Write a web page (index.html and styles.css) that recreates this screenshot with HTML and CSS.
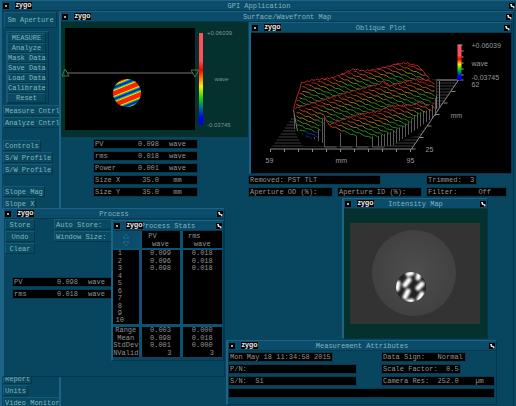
FILE: index.html
```
<!DOCTYPE html>
<html lang="en">

<head>
    <title>GPI Application</title>
    <meta charset="utf-8">
    <meta content="width=device-width, initial-scale=1" name="viewport">
    <link rel="stylesheet" href="styles.css">
</head>

<body>
    <svg class="defs" width="0" height="0">
        <symbol id="pin" viewBox="0 0 6 6">
            <path d="M1 1h2v1.500l2.500 1v2h-1l-1-1.500h-1.500z" fill="#ddd" />
        </symbol>
    </svg>

    <div class="window app">
        <header class="bar">
            <button class="menu" aria-label="Menu"></button>
            <span class="logo">zygo</span>
            <h1>GPI Application</h1>
            <svg class="pin"><use href="#pin" /></svg>
        </header>

        <div class="desk">
            <nav class="sidebar">
                <button class="btn aperture">Sm Aperture</button>
                <div class="panel">
                    <button class="btn">MEASURE</button>
                    <button class="btn">Analyze</button>
                    <button class="btn">Mask Data</button>
                    <button class="btn">Save Data</button>
                    <button class="btn">Load Data</button>
                    <button class="btn">Calibrate</button>
                    <button class="btn">Reset</button>
                </div>
                <div class="links">
                    <button class="btn">Measure Cntrl</button>
                    <button class="btn">Analyze Cntrl</button>
                </div>
                <div class="links controls">
                    <button class="btn">Controls</button>
                    <button class="btn">S/W Profile</button>
                    <button class="btn">S/W Profile</button>
                </div>
                <div class="links slopes">
                    <button class="btn">Slope Mag</button>
                    <button class="btn">Slope X</button>
                </div>
                <div class="links reports">
                    <button class="btn">Report</button>
                    <button class="btn">Units</button>
                    <button class="btn">Video Monitor</button>
                </div>
            </nav>

            <section class="window surface">
                <header class="bar">
                    <button class="menu" aria-label="Menu"></button>
                    <span class="logo">zygo</span>
                    <h2>Surface/Wavefront Map</h2>
                    <svg class="pin"><use href="#pin" /></svg>
                </header>

                <div class="columns">
                    <div class="left">
                        <div class="map">
                            <svg class="fringes" viewBox="0 0 138 104">
                                <defs>
                                    <linearGradient id="fringe" gradientUnits="userSpaceOnUse" x1="64" y1="62" x2="66" y2="67" spreadMethod="reflect">
                                        <stop offset="0.350" stop-color="#f20" />
                                        <stop offset="0.500" stop-color="#fd0" />
                                        <stop offset="0.700" stop-color="#1c2" />
                                        <stop offset="0.900" stop-color="#02e" />
                                    </linearGradient>
                                </defs>
                                <rect x="4" y="1" width="130" height="102" />
                                <path d="M6 46H132" stroke="#777" />
                                <path d="M1 49l3-7 4 7zM130 43h8l-4 7z" fill="none" stroke="#3c7a42" />
                                <circle cx="66" cy="66" r="14" fill="url(#fringe)" />
                            </svg>
                            <div class="scale"></div>
                            <div class="scale-text">
                                <span>+0.06039</span>
                                <span class="unit">wave</span>
                                <span>-0.03745</span>
                            </div>
                        </div>
                        <div class="results">
                            <div class="field reading"><span>PV</span><span>0.098</span><span>wave</span></div>
                            <div class="field reading"><span>rms</span><span>0.018</span><span>wave</span></div>
                            <div class="field reading"><span>Power</span><span>0.001</span><span>wave</span></div>
                            <div class="field reading"><span>Size X</span><span>35.0</span><span>mm</span></div>
                            <div class="field reading"><span>Size Y</span><span>35.0</span><span>mm</span></div>
                        </div>
                    </div>

                    <div class="right">
                        <section class="window oblique">
                            <header class="bar">
                                <button class="menu" aria-label="Menu"></button>
                                <span class="logo">zygo</span>
                                <h2>Oblique Plot</h2>
                                <svg class="pin"><use href="#pin" /></svg>
                            </header>
                            <svg class="plot" viewBox="0 0 257 140">
                                <defs>
                                    <linearGradient id="heat" x2="0" y2="1">
                                        <stop offset="0.300" stop-color="#ff5058" />
                                        <stop offset="0.400" stop-color="#f00" />
                                        <stop offset="0.550" stop-color="#fe0" />
                                        <stop offset="0.700" stop-color="#1c1" />
                                        <stop offset="0.900" stop-color="#00f" />
                                    </linearGradient>
                                </defs>
                                <g id="mesh"></g>
                                <rect x="205" y="12" width="4" height="35" fill="url(#heat)" />
                                <path d="M205 12h5M209 18h2M209 24h2M209 30h2M209 36h2M209 42h2" stroke="#aaa" fill="none" />
                                <text x="219" y="15">+0.06039</text>
                                <text x="219" y="33">wave</text>
                                <text x="219" y="47">-0.03745</text>
                                <text x="219" y="54">62</text>
                                <text x="198" y="85">mm</text>
                                <text x="173" y="119">25</text>
                                <text x="13" y="130">59</text>
                                <text x="83" y="130">mm</text>
                                <text x="154" y="130">95</text>
                            </svg>
                        </section>
                        <div class="notes">
                            <div class="field removed">Removed: PST TLT</div>
                            <div class="field trimmed">Trimmed:  3</div>
                            <div class="field">Aperture OD (%):</div>
                            <div class="field">Aperture ID (%):</div>
                            <div class="field">Filter:     Off</div>
                        </div>
                    </div>
                </div>
            </section>
        </div>
    </div>

    <section class="window intensity">
        <header class="bar">
            <button class="menu" aria-label="Menu"></button>
            <span class="logo">zygo</span>
            <h2>Intensity Map</h2>
            <svg class="pin"><use href="#pin" /></svg>
        </header>
        <div class="camera">
            <svg viewBox="0 0 130 101">
                <defs>
                    <clipPath id="spot"><circle cx="61" cy="64" r="15" /></clipPath>
                    <radialGradient id="glow">
                        <stop offset="0" stop-color="#4e4e4e" />
                        <stop offset="1" stop-color="#414141" />
                    </radialGradient>
                    <filter id="soft"><feGaussianBlur stdDeviation="1" /></filter>
                </defs>
                <rect width="130" height="101" fill="#333" />
                <ellipse cx="64" cy="50" rx="42" ry="43" fill="url(#glow)" />
                <g clip-path="url(#spot)">
                    <rect x="45" y="48" width="32" height="32" fill="#222" />
                    <g stroke="#fff" stroke-width="5" stroke-linecap="round" filter="url(#soft)">
                        <path d="M48 60L47 66M59 57L55 62M62 50L58 51M58 68L55 74M69 51L68 55M72 61L68 65M62 78L58 79M72 71L69 76" />
                    </g>
                </g>
            </svg>
        </div>
    </section>

    <section class="window attributes">
        <header class="bar">
            <button class="menu" aria-label="Menu"></button>
            <span class="logo">zygo</span>
            <h2>Measurement Attributes</h2>
            <svg class="pin"><use href="#pin" /></svg>
        </header>
        <div class="attribute-grid">
            <div class="field date">Mon May 18 11:34:58 2015</div>
            <div class="field sign">Data Sign:   Normal</div>
            <div class="field">P/N:</div>
            <div class="field factor">Scale Factor:  0.5</div>
            <div class="field">S/N:  S1</div>
            <div class="field">Camera Res:  252.0    µm</div>
            <div class="field comment"></div>
        </div>
    </section>

    <section class="window process">
        <header class="bar">
            <button class="menu" aria-label="Menu"></button>
            <span class="logo">zygo</span>
            <h2>Process</h2>
            <svg class="pin"><use href="#pin" /></svg>
        </header>
        <div class="process-buttons">
            <div class="links">
                <button class="btn">Store</button>
                <button class="btn">Undo</button>
                <button class="btn">Clear</button>
            </div>
            <div class="links options">
                <button class="btn">Auto Store:</button>
                <button class="btn">Window Size:</button>
            </div>
        </div>
        <div class="process-results">
            <div class="field reading"><span>PV</span><span>0.098</span><span>wave</span></div>
            <div class="field reading"><span>rms</span><span>0.018</span><span>wave</span></div>
        </div>

        <section class="window stats">
            <header class="bar">
                <button class="menu" aria-label="Menu"></button>
                <span class="logo">zygo</span>
                <h2>Process Stats</h2>
                <svg class="pin"><use href="#pin" /></svg>
            </header>
            <table>
                <thead>
                    <tr>
                        <td class="arrows"><svg viewBox="0 0 8 14"><path d="M1 5l3-4 3 4zM1 9h6l-3 4z" /></svg></td>
                        <th>PV<span>wave</span></th>
                        <th>rms<span>wave</span></th>
                    </tr>
                </thead>
                <tbody class="runs">
                    <tr><th>1</th><td>0.099</td><td>0.018</td></tr>
                    <tr><th>2</th><td>0.096</td><td>0.018</td></tr>
                    <tr><th>3</th><td>0.098</td><td>0.018</td></tr>
                    <tr><th>4</th><td></td><td></td></tr>
                    <tr><th>5</th><td></td><td></td></tr>
                    <tr><th>6</th><td></td><td></td></tr>
                    <tr><th>7</th><td></td><td></td></tr>
                    <tr><th>8</th><td></td><td></td></tr>
                    <tr><th>9</th><td></td><td></td></tr>
                    <tr><th>10</th><td></td><td></td></tr>
                </tbody>
                <tbody class="totals">
                    <tr><th>Range</th><td>0.003</td><td>0.000</td></tr>
                    <tr><th>Mean</th><td>0.098</td><td>0.018</td></tr>
                    <tr><th>StdDev</th><td>0.001</td><td>0.000</td></tr>
                    <tr><th>NValid</th><td>3</td><td>3</td></tr>
                </tbody>
            </table>
        </section>
    </section>

    <script src="plot.js"></script>
</body>

</html>
```
FILE: styles.css
```
* {
    box-sizing: border-box;
    margin: 0;
    padding: 0;
}

body {
    background: #08465f;
    color: #84b4bd;
    font-family: "Liberation Mono", "Courier New", monospace;
    font-size: 7px;
    line-height: 8px;
    min-height: 100vh;
    overflow: hidden;
    position: relative;
}

.defs {
    position: absolute;
}

/* windows */

.window {
    background: #08465f;
    border: 1px solid;
    border-color: #1c6386 #04354a #04354a #1c6386;
    border-left-width: 2px;
}

.bar {
    align-items: center;
    background: #0a4c6a;
    border-bottom: 1px solid #063a50;
    display: grid;
    grid-template-columns: 12px 17px 1fr 6px;
    height: 10px;
    padding: 0 1px;
}

.bar > * {
    grid-row: 1;
}

.bar h1,
.bar h2 {
    font-size: 7px;
    font-weight: normal;
    grid-column: 1 / -1;
    line-height: 8px;
    text-align: center;
}

.menu {
    background: #aaa;
    border: 2px solid #000;
    grid-column: 1;
    height: 6px;
    width: 6px;
    z-index: 1;
}

.logo {
    background: #000;
    color: #eee;
    font-family: "Liberation Sans", Arial, sans-serif;
    font-weight: bold;
    grid-column: 2;
    height: 7px;
    line-height: 6px;
    text-align: center;
    z-index: 1;
}

.pin {
    background: #000;
    grid-column: 4;
    height: 6px;
    width: 6px;
}

.btn {
    background: #094a63;
    border: 1px solid;
    border-color: #165a76 #04354a #04354a #165a76;
    color: inherit;
    font: inherit;
    height: 11px;
    padding: 0 1px;
    white-space: nowrap;
}

.field {
    background: #000;
    color: #929292;
    height: 8px;
    outline: 1px solid #063a50;
    padding: 0 1px;
    white-space: pre;
}

.reading {
    display: grid;
    grid-template-columns: 30px 34px 1fr;
    width: 103px;
}

.reading span:nth-child(2) {
    text-align: right;
}

.reading span:nth-child(3) {
    text-align: center;
}

/* main window */

.app {
    border-bottom: 0;
    border-right: 0;
    display: flex;
    flex-direction: column;
    min-height: 100vh;
}

.desk {
    display: flex;
    flex: 1;
}

.sidebar {
    flex: none;
    height: 395px;
    padding: 1px 0 0 2px;
    width: 57px;
}

.aperture {
    height: 16px;
    width: 53px;
}

.panel {
    border: 1px solid;
    border-color: #165a76 #04354a #04354a #165a76;
    display: flex;
    flex-direction: column;
    margin: 3px 0 1px 2px;
    padding: 1px 2px 0 0;
    width: 43px;
}

.panel .btn {
    height: 10px;
    padding: 0;
}

.links {
    align-items: flex-start;
    display: flex;
    flex-direction: column;
    gap: 1px;
    margin-left: -1px;
}

.controls {
    margin-top: 12px;
}

.slopes {
    margin-top: 11px;
}

.reports {
    margin-top: 164px;
}

.surface {
    border-bottom: 0;
    flex: 1;
    margin-right: 2px;
}

.columns {
    display: flex;
}

.left {
    flex: none;
    width: 187px;
}

.right {
    flex: 1;
    padding: 0 1px;
}

.map {
    background: #04302e;
    display: flex;
    height: 115px;
    padding-top: 5px;
}

.fringes {
    height: 104px;
    width: 138px;
}

.scale {
    background: linear-gradient(#ff5058 30%, #f00 40%, #fe0 58%, #1c1 72%, #00f 92%);
    height: 92px;
    margin-top: 6px;
    width: 4px;
}

.scale-text {
    color: #7d9492;
    display: flex;
    flex-direction: column;
    font-family: "Liberation Sans", Arial, sans-serif;
    font-size: 6px;
    height: 100px;
    justify-content: space-between;
    margin: 2px 0 0 4px;
}

.unit {
    padding-left: 4px;
    text-align: center;
}

.results {
    display: flex;
    flex-direction: column;
    gap: 4px;
    padding: 3px 0 0 33px;
}

.oblique {
    height: 152px;
}

.plot {
    background: #000;
    display: block;
    height: 140px;
    width: 100%;
}

.plot text {
    fill: #999;
    font-family: "Liberation Sans", Arial, sans-serif;
}

.notes {
    display: grid;
    gap: 4px 6px;
    grid-template-columns: 83px 83px 79px;
    padding-top: 2px;
}

.removed {
    grid-column: 1 / 3;
    width: 131px;
}

.trimmed {
    width: 49px;
}

/* floating windows */

.intensity {
    left: 342px;
    position: absolute;
    top: 198px;
    width: 146px;
}

.camera {
    background: #04302e;
    height: 129px;
    padding: 14px 7px 0 6px;
}

.camera svg {
    display: block;
    width: 100%;
}

.attributes {
    left: 226px;
    position: absolute;
    top: 340px;
    width: 271px;
}

.attribute-grid {
    display: grid;
    gap: 4px 26px;
    grid-template-columns: 127px 1fr;
    padding: 2px 2px 7px 1px;
}

.date {
    width: 103px;
}

.sign {
    width: 83px;
}

.factor {
    width: 78px;
}

.comment {
    grid-column: 1 / -1;
}

.process {
    height: 169px;
    left: 2px;
    position: absolute;
    top: 208px;
    width: 223px;
}

.process-buttons {
    display: flex;
    gap: 20px;
    padding-left: 2px;
}

.process-buttons .btn {
    width: 30px;
}

.process-buttons .options .btn {
    text-align: left;
    width: 60px;
}

.process-results {
    display: flex;
    flex-direction: column;
    gap: 4px;
    padding: 24px 0 0 9px;
}

.stats {
    left: 107px;
    padding-bottom: 3px;
    position: absolute;
    top: 11px;
    width: 113px;
}

.stats table {
    border-collapse: collapse;
    color: #929292;
    table-layout: fixed;
    width: 109px;
}

.stats th,
.stats td {
    background: #000;
    border-left: 3px solid #0d5270;
    font-weight: normal;
    line-height: 7px;
    text-align: center;
}

.stats td:first-child,
.stats th:first-child {
    border-left: 0;
    width: 27px;
}

.stats thead th {
    line-height: 8px;
    padding: 1px 16px 0 0;
}

.stats thead span {
    display: block;
    margin-right: -16px;
}

.stats .arrows {
    background: #0a4c6a;
}

.arrows svg {
    display: block;
    fill: #0a4560;
    height: 14px;
    margin: 0 auto;
    stroke: #1c6a8c;
    width: 8px;
}

.stats tbody tr {
    height: 7px;
}

.stats tbody tr:nth-child(even) {
    height: 8px;
}

.stats tbody tr:first-child > * {
    border-top: 2px solid #0d5270;
}

.stats .totals tr:first-child > * {
    border-top-width: 3px;
}

.runs th {
    padding-right: 12px;
}

.stats .totals tr:last-child td {
    padding-right: 8px;
    text-align: right;
}
```
FILE: plot.js
```
const mesh = document.getElementById('mesh');

const ridges = [
    [[41, 75], [49, 50], [60, 47], [79, 45], [90, 41], [101, 36], [111, 38], [125, 36], [137, 33], [143, 31], [154, 30], [166, 33], [177, 46], [184, 48]],
    [[41, 76], [57, 71], [77, 65], [104, 57], [127, 51], [131, 48], [137, 53], [164, 46], [184, 48]],
    [[41, 77], [45, 98], [55, 104], [63, 103], [71, 81], [76, 92], [84, 89], [104, 82], [127, 78], [137, 73], [161, 72], [167, 69], [176, 73], [184, 62]],
    [[41, 77], [45, 98], [55, 105], [63, 104], [71, 82], [76, 93], [90, 101], [110, 104], [125, 103], [140, 98], [155, 90], [165, 80], [178, 76], [184, 62]]
];

function heightAt(points, x) {
    for (let i = 1; i < points.length; i++) {
        const [x0, y0] = points[i - 1];
        const [x1, y1] = points[i];
        if (x <= x1) {
            return y0 + (y1 - y0) * (x - x0) / (x1 - x0);
        }
    }
    return points[points.length - 1][1];
}

function path(d, stroke, fill) {
    const el = document.createElementNS('http://www.w3.org/2000/svg', 'path');
    el.setAttribute('d', d);
    el.setAttribute('stroke', stroke);
    el.setAttribute('fill', fill || 'none');
    mesh.appendChild(el);
}

function color(t, x, y) {
    if (x < 66 && y > 98) return '#1630c0';
    if (t < 0.15) return '#b82020';
    if (t < 0.35) return '#a85018';
    if (t < 0.6) return '#8c8018';
    return '#2c8420';
}

// floor
let floor = '';
for (let y = 47; y < 116; y += 3) {
    const k = (116 - y) / 69;
    floor += `M${18 + k * 47} ${y}H${159 + k * 47}`;
}
path(floor, '#3c3c3c');

// walls under the surface
const edge = ridges[3].map(p => p.join(' ')).join('L');
path(`M41 77L${edge}L184 82L165 102L135 113H50L43 100Z`, 'none', '#000');
let walls = '';
for (let x = 42; x < 72; x += 4) {
    walls += `M${x} ${heightAt(ridges[3], x)}V${96 + (x - 42) / 2}`;
}
for (let x = 72; x < 128; x += 16) {
    walls += `M${x} ${heightAt(ridges[3], x)}V114H${x + 12}`;
}
for (let x = 126; x < 185; x += 3) {
    walls += `M${x} ${heightAt(ridges[3], x)}V${Math.min(113, 113 - (x - 140) * 0.7)}`;
}
path(walls, '#5a5a5a');
path('M184 48V76M187 48V74', '#777');

// profile lines
for (let band = 0; band < 3; band++) {
    const top = ridges[band];
    const bottom = ridges[band + 1];
    const shape = top.concat(bottom.slice().reverse()).map(p => p.join(' ')).join('L');
    path(`M${shape}Z`, 'none', '#000');
    for (let c = -50; c < 120; c += 4) {
        for (let x = 41; x < 182; x += 3) {
            const y = c + 0.4 * (x - 41) + Math.sin(x * 0.7 + c) * 0.7;
            const y2 = c + 0.4 * (x - 38) + Math.sin((x + 3) * 0.7 + c) * 0.7;
            const a = heightAt(top, x);
            const b = heightAt(bottom, x);
            if (y > a && y < b) {
                path(`M${x} ${y}L${x + 3} ${y2}`, color((y - a) / Math.max(b - a, 14), x, y));
            }
        }
    }
    let ridge = '';
    for (let x = band === 2 ? 71 : 41; x < 178; x += 2) {
        ridge += `${ridge ? 'L' : 'M'}${x} ${heightAt(top, x) + Math.sin(x * 1.9) * 0.8}`;
    }
    path(ridge, '#b42828');
}
path('M41 77L45 98', '#777');

// axes
let axes = 'M18 116H159L206 47H184';
for (let i = 0; i <= 10; i++) {
    axes += `M${18 + i * 14} 116v3`;
}
for (let i = 0; i <= 6; i++) {
    axes += `M${159 + i * 8} ${116 - i * 11.5}h4`;
}
path(axes, '#888');
```
